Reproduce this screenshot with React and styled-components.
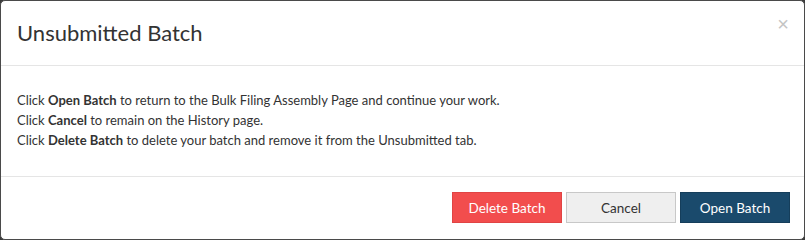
import React from "react";
import styled, { createGlobalStyle } from "styled-components";

const GlobalStyle = createGlobalStyle`
  html, body {
    margin: 0;
    padding: 0;
    background: #3a3a3a;
  }
  body {
    font-family: Lato, "Open Sans", sans-serif;
    color: #333;
  }
`;

const Modal = styled.div`
  box-sizing: border-box;
  width: 805px;
  height: 240px;
  background: #fff;
  border: 1px solid #4a4a4a;
  border-radius: 5px;
  display: flex;
  flex-direction: column;
  overflow: hidden;
`;

const Header = styled.div`
  display: flex;
  align-items: flex-start;
  justify-content: space-between;
  padding: 18px 15px 18px 16px;
  border-bottom: 1px solid #e5e5e5;
`;

const Title = styled.h4`
  margin: 0;
  font-size: 22px;
  font-weight: 400;
  line-height: 28px;
  color: #333;
`;

const Close = styled.button`
  border: 0;
  background: none;
  padding: 0;
  margin-top: -3px;
  color: #c4c4c4;
  font-size: 20px;
  line-height: 16px;
  cursor: pointer;
  font-family: Arial, "Liberation Sans", sans-serif;
`;

const Body = styled.div`
  flex: 1;
  padding: 24px 16px 0 16px;
  font-size: 13px;
  line-height: 20px;
`;

const Line = styled.p`
  margin: 0;
`;

const Footer = styled.div`
  display: flex;
  justify-content: flex-end;
  gap: 4px;
  padding: 15px 14px 16px;
  border-top: 1px solid #e5e5e5;
`;

const Button = styled.button`
  box-sizing: border-box;
  width: 110px;
  height: 31px;
  font-family: inherit;
  font-size: 13.5px;
  border-radius: 0;
  cursor: pointer;
  border: 1px solid ${(p) => p.$border};
  background: ${(p) => p.$bg};
  color: ${(p) => p.$color};
`;

export default function App() {
  return (
    <>
      <GlobalStyle />
      <Modal>
        <Header>
          <Title>Unsubmitted Batch</Title>
          <Close aria-label="Close">×</Close>
        </Header>
        <Body>
          <Line>
            Click <b>Open Batch</b> to return to the Bulk Filing Assembly Page and continue your work.
          </Line>
          <Line>
            Click <b>Cancel</b> to remain on the History page.
          </Line>
          <Line>
            Click <b>Delete Batch</b> to delete your batch and remove it from the Unsubmitted tab.
          </Line>
        </Body>
        <Footer>
          <Button $bg="#f24d4d" $border="#e04444" $color="#fff">Delete Batch</Button>
          <Button $bg="#efefef" $border="#c8c8c8" $color="#333">Cancel</Button>
          <Button $bg="#1a4a6c" $border="#153e5b" $color="#fff">Open Batch</Button>
        </Footer>
      </Modal>
    </>
  );
}
